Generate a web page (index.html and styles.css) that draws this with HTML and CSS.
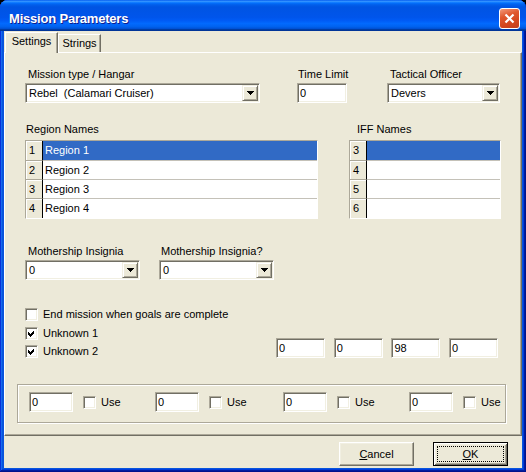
FILE: index.html
```html
<!DOCTYPE html>
<html lang="en">
<head>
    <meta charset="UTF-8">
    <title>Mission Parameters</title>
    <link rel="stylesheet" href="styles.css">
</head>
<body>
<div class="window">
    <div class="titlebar">
        <span class="title">Mission Parameters</span>
        <span class="close">
            <svg width="11" height="11" viewBox="0 0 11 11"><path d="M1.5 1.5 L9.5 9.5 M9.5 1.5 L1.5 9.5" stroke="#fff" stroke-width="2.2"/></svg>
        </span>
    </div>
    <div class="client">
        <div class="tabs">
            <div class="tab active">Settings</div>
            <div class="tab">Strings</div>
        </div>
        <div class="panel">
            <div class="row row-top">
                <div class="field f-hangar">
                    <div class="field-label">Mission type / Hangar</div>
                    <div class="combo sunken">
                        <span class="combo-text">Rebel&nbsp; (Calamari Cruiser)</span>
                        <span class="drop"><svg width="7" height="4" shape-rendering="crispEdges"><polygon points="0,0 7,0 4,4 3,4"/></svg></span>
                    </div>
                </div>
                <div class="field f-time">
                    <div class="field-label">Time Limit</div>
                    <input class="edit sunken" type="text" value="0">
                </div>
                <div class="field f-officer">
                    <div class="field-label">Tactical Officer</div>
                    <div class="combo sunken">
                        <span class="combo-text">Devers</span>
                        <span class="drop"><svg width="7" height="4" shape-rendering="crispEdges"><polygon points="0,0 7,0 4,4 3,4"/></svg></span>
                    </div>
                </div>
            </div>

            <div class="row row-names">
                <div class="field f-regions">
                    <div class="field-label">Region Names</div>
                    <div class="grid">
                        <div class="grid-row selected"><span class="num">1</span><span class="cell">Region 1</span></div>
                        <div class="grid-row"><span class="num">2</span><span class="cell">Region 2</span></div>
                        <div class="grid-row"><span class="num">3</span><span class="cell">Region 3</span></div>
                        <div class="grid-row"><span class="num">4</span><span class="cell">Region 4</span></div>
                    </div>
                </div>
                <div class="field f-iff">
                    <div class="field-label">IFF Names</div>
                    <div class="grid">
                        <div class="grid-row selected"><span class="num">3</span><span class="cell"></span></div>
                        <div class="grid-row"><span class="num">4</span><span class="cell"></span></div>
                        <div class="grid-row"><span class="num">5</span><span class="cell"></span></div>
                        <div class="grid-row"><span class="num">6</span><span class="cell"></span></div>
                    </div>
                </div>
            </div>

            <div class="row row-insignia">
                <div class="field f-ins1">
                    <div class="field-label">Mothership Insignia</div>
                    <div class="combo sunken">
                        <span class="combo-text">0</span>
                        <span class="drop"><svg width="7" height="4" shape-rendering="crispEdges"><polygon points="0,0 7,0 4,4 3,4"/></svg></span>
                    </div>
                </div>
                <div class="field f-ins2">
                    <div class="field-label">Mothership Insignia?</div>
                    <div class="combo sunken">
                        <span class="combo-text">0</span>
                        <span class="drop"><svg width="7" height="4" shape-rendering="crispEdges"><polygon points="0,0 7,0 4,4 3,4"/></svg></span>
                    </div>
                </div>
            </div>

            <div class="row row-opts">
                <div class="opts">
                    <div class="opt"><span class="check sunken"></span>End mission when goals are complete</div>
                    <div class="opt"><span class="check sunken"><svg width="7" height="7" shape-rendering="crispEdges"><polygon points="0,2 2,4 6,0 6,3 2,7 0,5"/></svg></span>Unknown 1</div>
                    <div class="opt"><span class="check sunken"><svg width="7" height="7" shape-rendering="crispEdges"><polygon points="0,2 2,4 6,0 6,3 2,7 0,5"/></svg></span>Unknown 2</div>
                </div>
                <div class="unknowns">
                    <input class="edit sunken" type="text" value="0">
                    <input class="edit sunken" type="text" value="0">
                    <input class="edit sunken" type="text" value="98">
                    <input class="edit sunken" type="text" value="0">
                </div>
            </div>

            <div class="group">
                <div class="use-item"><input class="edit sunken" type="text" value="0"><span class="check sunken"></span><span class="use-text">Use</span></div>
                <div class="use-item"><input class="edit sunken" type="text" value="0"><span class="check sunken"></span><span class="use-text">Use</span></div>
                <div class="use-item"><input class="edit sunken" type="text" value="0"><span class="check sunken"></span><span class="use-text">Use</span></div>
                <div class="use-item"><input class="edit sunken" type="text" value="0"><span class="check sunken"></span><span class="use-text">Use</span></div>
            </div>
        </div>

        <div class="buttons">
            <button class="btn"><u>C</u>ancel</button>
            <button class="btn default"><span class="focus"><u>O</u>K</span></button>
        </div>
    </div>
</div>
</body>
</html>
```

FILE: styles.css
```css
body {
    margin: 0;
    background: #000;
    font-family: "Liberation Sans", Arial, sans-serif;
    font-size: 11px;
    color: #000;
}
.window {
    width: 526px;
    height: 472px;
    background: #0855dd;
    border-radius: 8px 8px 0 0;
    overflow: hidden;
    box-shadow: inset -1px -1px #00138c, inset 1px 1px #0831d9, inset -2px -2px #001ea0, inset 2px 2px #166aee, inset -3px -3px #003bda, inset 3px 3px #0855dd;
}
.titlebar {
    height: 31px;
    display: flex;
    align-items: flex-start;
    background: linear-gradient(180deg, #0058ee 0%, #3593ff 4%, #288eff 6%, #127dff 8%, #036ffc 10%, #0262ee 14%, #0057e5 20%, #0054e3 24%, #0055eb 56%, #005bf5 66%, #026afe 76%, #0062ef 86%, #0052d6 92%, #0040ab 94%, #003092 100%);
}
.title {
    margin: 11px 0 0 9px;
    font-size: 13px;
    line-height: 15px;
    font-weight: bold;
    letter-spacing: -0.2px;
    color: #fff;
    text-shadow: 1px 1px 0 #0f1e8f;
}
.close {
    margin: 8px 6px 0 auto;
    width: 21px;
    height: 21px;
    box-sizing: border-box;
    border: 1px solid #fff;
    border-radius: 3px;
    background: linear-gradient(160deg, #f29b7c 0%, #e0582e 35%, #d3461d 70%, #c23f1c 100%);
    display: flex;
    align-items: center;
    justify-content: center;
}
.client {
    margin: 0 4px;
    height: 437px;
    background: #ece9d8;
}

/* tabs */
.tabs {
    height: 21px;
    display: flex;
    align-items: flex-end;
    padding-left: 1px;
}
.tab {
    box-sizing: border-box;
    height: 18px;
    width: 43px;
    padding-top: 2px;
    line-height: 13px;
    text-align: center;
    border: 1px solid;
    border-color: #fff #716f64 transparent #fff;
    border-bottom: none;
    box-shadow: inset -1px 0 #aca899;
    background: #ece9d8;
}
.tab.active {
    position: relative;
    z-index: 1;
    width: 53px;
    height: 21px;
    margin-bottom: -1px;
}
.panel {
    box-sizing: border-box;
    height: 384px;
    border: 1px solid;
    border-color: #fff #716f64 #716f64 #fff;
    box-shadow: inset -1px -1px #aca899;
    overflow: hidden;
}

/* form rows */
.row {
    display: flex;
}
.row-top {
    margin-top: 15px;
}
.row-names {
    margin-top: 20px;
}
.row-insignia {
    margin-top: 26px;
}
.row-opts {
    margin-top: 28px;
    align-items: flex-end;
}
.field {
    display: flex;
    flex-direction: column;
}
.field-label {
    height: 13px;
    line-height: 13px;
    margin-bottom: 2px;
    white-space: nowrap;
}
.f-hangar { margin-left: 20px; width: 235px; }
.f-hangar .field-label { padding-left: 3px; }
.f-time { margin-left: 37px; width: 50px; }
.f-time .field-label { padding-left: 1px; }
.f-officer { margin-left: 40px; width: 113px; }
.f-officer .field-label { padding-left: 3px; }
.f-regions { margin-left: 20px; width: 293px; }
.f-regions .field-label { padding-left: 1px; margin-bottom: 4px; }
.f-iff { margin-left: 31px; width: 152px; }
.f-iff .field-label { padding-left: 8px; margin-bottom: 4px; }
.f-ins1 { margin-left: 20px; width: 115px; }
.f-ins1 .field-label { padding-left: 3px; }
.f-ins2 { margin-left: 19px; width: 115px; }
.f-ins2 .field-label { padding-left: 2px; }

/* controls */
.sunken {
    box-sizing: border-box;
    border: 1px solid;
    border-color: #aca899 #fff #fff #aca899;
    box-shadow: inset 1px 1px 0 #716f64, inset -1px -1px 0 #f1efe2;
    background: #fff;
}
.edit {
    height: 20px;
    width: 100%;
    margin: 0;
    padding: 0 0 0 2px;
    font: inherit;
    color: #000;
    outline: none;
}
.combo {
    height: 20px;
    padding: 1px;
    display: flex;
    align-items: center;
}
.combo-text {
    flex: 1;
    padding-left: 2px;
    white-space: nowrap;
    overflow: hidden;
}
.drop {
    box-sizing: border-box;
    width: 16px;
    height: 16px;
    border: 1px solid;
    border-color: #f1efe2 #716f64 #716f64 #f1efe2;
    box-shadow: inset 1px 1px #fff, inset -1px -1px #aca899;
    background: #ece9d8;
    display: flex;
    align-items: center;
    justify-content: center;
}
.drop svg {
    fill: #000;
    margin-left: 1px;
}
.check {
    width: 13px;
    height: 13px;
    flex: none;
    display: flex;
    align-items: center;
    justify-content: center;
}
.check svg {
    fill: #000;
}

/* grids */
.grid {
    box-sizing: border-box;
    height: 79px;
    border: 1px solid;
    border-color: #aca899 #fff #fff #aca899;
    background: #fff;
}
.grid-row {
    display: flex;
    height: 19px;
}
.grid-row:first-child {
    height: 20px;
}
.num {
    box-sizing: border-box;
    width: 17px;
    padding-left: 3px;
    line-height: 18px;
    background: #ece9d8;
    border-right: 1px solid #000;
    border-bottom: 1px solid #aca899;
    box-shadow: inset 1px 1px #fff;
}
.cell {
    flex: 1;
    padding-left: 2px;
    line-height: 18px;
    border-bottom: 1px solid #c4c1b8;
    white-space: nowrap;
}
.grid-row:first-child .num,
.grid-row:first-child .cell {
    line-height: 19px;
}
.grid-row:last-child .num,
.grid-row:last-child .cell {
    border-bottom: none;
    line-height: 19px;
}
.selected .cell {
    background: #316ac5;
    color: #fff;
}

/* options */
.opts {
    margin-left: 20px;
    width: 251px;
    display: flex;
    flex-direction: column;
    gap: 5px;
}
.opt {
    height: 13px;
    line-height: 13px;
    display: flex;
    align-items: center;
    white-space: nowrap;
}
.opt:first-child {
    margin-bottom: 1px;
}
.opt .check {
    margin-right: 5px;
}
.unknowns {
    display: flex;
    gap: 8.7px;
}
.unknowns .edit {
    width: 49px;
}

/* group box */
.group {
    box-sizing: border-box;
    margin: 26px 0 0 12px;
    width: 489px;
    height: 39px;
    padding: 7px 0 0 11px;
    border: 1px solid #aca899;
    box-shadow: inset 1px 1px 0 #fff, 1px 1px 0 #fff;
    display: grid;
    grid-template-columns: 126px 128px 126px auto;
}
.use-item {
    display: flex;
    align-items: center;
    height: 20px;
}
.use-item .edit {
    width: 44px;
}
.use-item .check {
    margin-left: 10px;
}
.use-text {
    margin-left: 5px;
}

/* buttons */
.buttons {
    display: flex;
    justify-content: flex-end;
    gap: 19px;
    padding: 6px 14px 0 0;
}
.btn {
    box-sizing: border-box;
    width: 75px;
    height: 24px;
    padding: 0;
    font: inherit;
    color: #000;
    background: #ece9d8;
    border: 1px solid;
    border-color: #fff #716f64 #716f64 #fff;
    box-shadow: inset -1px -1px #aca899, inset 1px 1px #f1efe2;
}
.btn.default {
    border: 1px solid #000;
    padding: 3px;
    display: flex;
    box-shadow: inset 1px 1px #fff, inset -1px -1px #716f64, inset 2px 2px #f1efe2, inset -2px -2px #aca899;
}
.focus {
    flex: 1;
    border: 1px dotted #000;
    display: flex;
    align-items: center;
    justify-content: center;
}
```
